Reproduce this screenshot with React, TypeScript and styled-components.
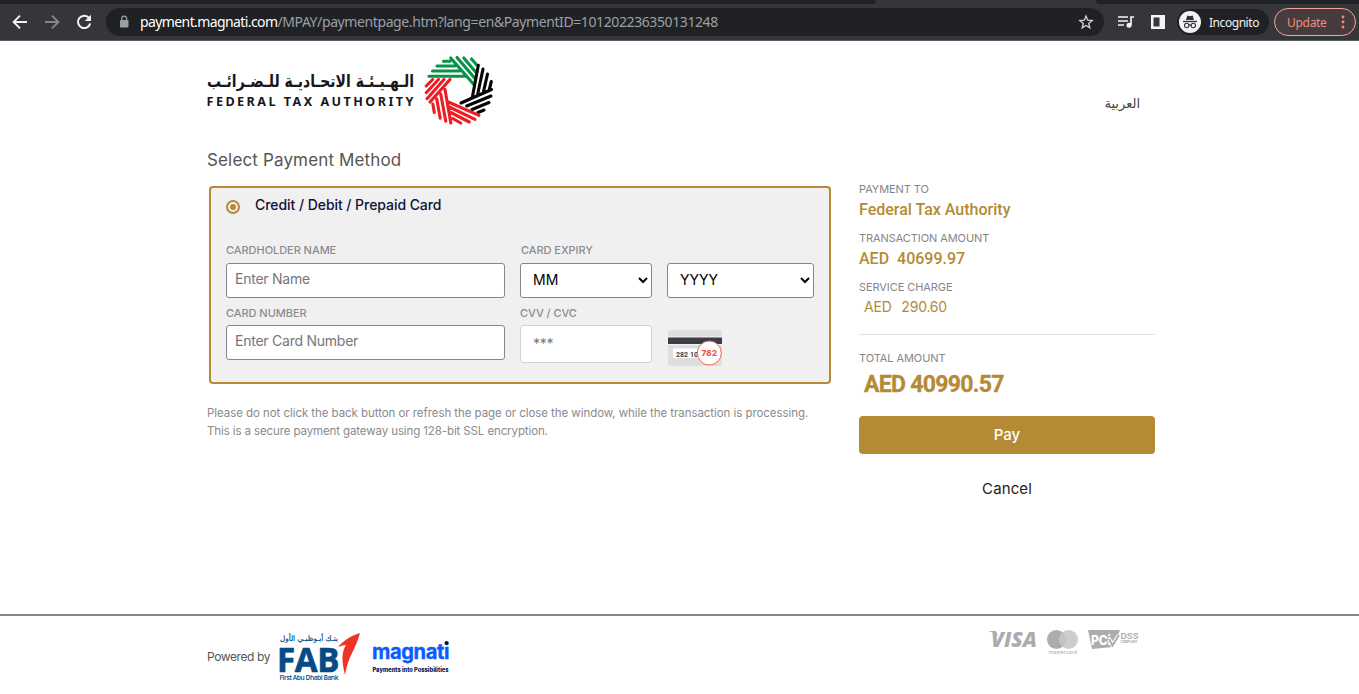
import React from "react";
import styled, { createGlobalStyle } from "styled-components";

const gold = "#b58a34";

const GlobalStyle = createGlobalStyle`
  *, *::before, *::after { box-sizing: border-box; }
  html, body { margin: 0; background: #fff; overflow: hidden; }
  body { font-family: Inter, "Liberation Sans", sans-serif; }
  svg { display: block; flex: none; overflow: visible; }
`;

const Page = styled.div`
  display: flex;
  flex-direction: column;
  height: 694px;
  width: 100%;
`;

/* Browser chrome */
const TabStrip = styled.div`
  display: grid;
  grid-template-columns: 876px 1fr 263px;
  height: 4px;
  background: #35363a;
`;
const TabGap = styled.div<{ $side: "left" | "right" }>`
  background: #202124;
  border-radius: ${(p) => (p.$side === "left" ? "0 0 4px 0" : "0 0 0 4px")};
  grid-column: ${(p) => (p.$side === "left" ? 1 : 3)};
`;
const Toolbar = styled.div`
  display: flex;
  align-items: center;
  height: 37px;
  padding-left: 12px;
  background: #35363a;
  border-bottom: 1px solid #5b5c5f;
  font-family: "Noto Sans", "Open Sans", sans-serif;
`;
const NavIcons = styled.div`
  display: flex;
  gap: 16px;
  width: 94px;
`;
const AddressBar = styled.div`
  display: flex;
  align-items: center;
  width: 998px;
  height: 28px;
  padding: 0 10px 0 12px;
  border-radius: 14px;
  background: #202124;
`;
const Url = styled.div`
  flex: 1;
  margin-left: 10px;
  font-size: 14px;
  letter-spacing: -0.4px;
  line-height: 28px;
  color: #9aa0a6;
  white-space: nowrap;
  span { color: #fff; letter-spacing: -0.6px; }
`;
const ToolIcons = styled.div`
  display: flex;
  gap: 16px;
  margin-left: 14px;
`;
const Incognito = styled.div`
  display: flex;
  align-items: center;
  gap: 8px;
  width: 92px;
  height: 26px;
  margin-left: 11px;
  padding-left: 2px;
  border-radius: 13px;
  background: #202124;
  color: #f1f3f4;
  font-size: 12px;
  letter-spacing: -0.45px;
`;
const Update = styled.div`
  display: flex;
  align-items: center;
  justify-content: space-between;
  width: 82px;
  height: 28px;
  margin-left: 5px;
  padding: 0 10px 0 12px;
  border: 1px solid #f5a49b;
  border-radius: 14px;
  background: #463c3e;
  color: #f28b82;
  font-size: 12px;
  letter-spacing: -0.3px;
`;

/* Payment page */
const Header = styled.header`
  display: flex;
  justify-content: space-between;
  height: 96px;
  padding: 9px 219px 0 200px;
`;
const Language = styled.a`
  margin-top: 42px;
  font: 13px/24px "Liberation Serif", "DejaVu Sans", serif;
  letter-spacing: -0.2px;
  color: #444;
`;
const Main = styled.main`
  display: grid;
  grid-template-columns: 624px 296px;
  column-gap: 28px;
  height: 477px;
  padding-left: 207px;
`;
const Left = styled.section`
  display: flex;
  flex-direction: column;
`;
const Title = styled.h1`
  margin: 12px 0 15px;
  font-size: 17px;
  line-height: 22px;
  font-weight: 400;
  letter-spacing: 0.15px;
  color: #555;
`;
const CardPanel = styled.div`
  width: 622px;
  height: 198px;
  margin-left: 2px;
  padding: 9px 15px 0;
  border: 2px solid ${gold};
  border-radius: 4px;
  background: #f0f0f0;
`;
const MethodRow = styled.label`
  display: flex;
  align-items: flex-start;
  height: 20px;
  gap: 15px;
  font-size: 14px;
  line-height: 16px;
  font-weight: 500;
  letter-spacing: -0.06px;
  color: #12123a;
`;
const Radio = styled.span`
  display: grid;
  place-items: center;
  width: 14px;
  height: 14px;
  margin-top: 3px;
  border: 2px solid ${gold};
  border-radius: 50%;
  &::after {
    content: "";
    width: 6px;
    height: 6px;
    border-radius: 50%;
    background: ${gold};
  }
`;
const Fields = styled.div`
  display: grid;
  grid-template-columns: 279px 132px 147px;
  column-gap: 15px;
  margin-top: 26px;
`;
const FieldLabel = styled.div<{ $row: 1 | 2; $inset?: boolean }>`
  height: ${(p) => (p.$row === 1 ? 20 : 27)}px;
  padding-top: ${(p) => (p.$row === 1 ? 0 : 8)}px;
  padding-left: ${(p) => (p.$inset ? 1 : 0)}px;
  font-size: 11px;
  line-height: 14px;
  font-weight: 500;
  letter-spacing: -0.05px;
  color: #8b8b8f;
`;
const Input = styled.input<{ $light?: boolean }>`
  width: 100%;
  height: ${(p) => (p.$light ? 38 : 35)}px;
  padding: 0 ${(p) => (p.$light ? 12 : 8)}px ${(p) => (p.$light ? 2 : 4)}px;
  border: 1px solid ${(p) => (p.$light ? "#ced4da" : "#86868b")};
  border-radius: ${(p) => (p.$light ? 4 : 3)}px;
  background: #fff;
  font: 14px Inter, sans-serif;
  letter-spacing: -0.24px;
  &::placeholder { color: #76767a; opacity: 1; }
`;
const Select = styled.select`
  width: 100%;
  height: 35px;
  padding: 0 2px 2px 8px;
  border: 1px solid #86868b;
  border-radius: 3px;
  background: #fff;
  color: #000;
  font: 14px Inter, sans-serif;
`;
const CvvHint = styled.div`
  padding: 5px 0 0 1px;
`;
const Notice = styled.p`
  margin: 20px 0 0;
  font-size: 11.5px;
  line-height: 18px;
  letter-spacing: -0.06px;
  color: #8a8a8e;
  white-space: nowrap;
`;
const NoticeLine = styled.span<{ $tight?: boolean }>`
  display: block;
  letter-spacing: ${(p) => (p.$tight ? "-0.11px" : "-0.06px")};
`;

const Summary = styled.aside`
  display: flex;
  flex-direction: column;
  padding-top: 44px;
  font-family: Roboto, sans-serif;
  color: ${gold};
`;
const Caption = styled.div<{ $spaced?: boolean }>`
  margin-top: ${(p) => (p.$spaced ? 15 : 0)}px;
  font: 400 11px/16px Inter, sans-serif;
  letter-spacing: -0.08px;
  color: #85858a;
`;
const Payee = styled.div`
  height: 33px;
  padding-top: 3px;
  font-size: 16px;
  line-height: 20px;
  font-weight: 500;
  white-space: pre;
`;
const Charge = styled.div`
  height: 40px;
  padding: 2px 0 0 5px;
  border-bottom: 1px solid #e2e2e2;
  font: 14px/20px Inter, sans-serif;
  letter-spacing: -0.22px;
  word-spacing: 1.2px;
  white-space: pre;
`;
const Total = styled.div`
  padding: 4px 0 0 5px;
  height: 50px;
  font-size: 23px;
  line-height: 30px;
  font-weight: 700;
  letter-spacing: -0.7px;
  -webkit-text-stroke: 0.3px ${gold};
`;
const PayButton = styled.button`
  height: 38px;
  padding: 0 0 2px;
  border: 0;
  border-radius: 4px;
  background: ${gold};
  color: #fff;
  font: 500 15px Inter, sans-serif;
`;
const CancelButton = styled.button`
  align-self: center;
  height: 24px;
  margin-top: 22px;
  padding: 0;
  border: 0;
  background: none;
  color: #222;
  font: 400 15px Inter, sans-serif;
  letter-spacing: 0.1px;
`;

const Footer = styled.footer`
  display: flex;
  justify-content: space-between;
  flex: 1;
  border-top: 2px solid #87878b;
  padding: 12px 220px 0 207px;
`;
const Powered = styled.div`
  display: flex;
  align-items: flex-start;
  font-size: 12px;
  letter-spacing: -0.4px;
  color: #555;
  > span { width: 70px; padding-top: 21px; line-height: 15px; white-space: nowrap; }
`;

const BackIcon = ({ color, flip }: { color: string; flip?: boolean }) => (
  <svg width="16" height="16" viewBox="0 0 16 16" fill="none" stroke={color} strokeWidth="1.9">
    <path d={flip ? "M1 8H14M8 1.6L14.4 8L8 14.4" : "M15 8H2M8 1.6L1.6 8L8 14.4"} />
  </svg>
);

const TaxLogo = () => (
  <svg width="300" height="80" viewBox="0 0 300 80">
    <g fill="#17171b">
      <text transform="translate(214 36.500) scale(1 1.150)" textAnchor="end" direction="ltr" fontFamily="DejaVu Sans, sans-serif" fontWeight="700" fontSize="15" textLength="207" lengthAdjust="spacingAndGlyphs">الـهـيـئـة الاتحـاديـة للـضـرائـب</text>
      <text x="6.500" y="55.500" fontFamily="Noto Sans, sans-serif" fontWeight="700" fontSize="12.600" textLength="207" lengthAdjust="spacing">FEDERAL TAX AUTHORITY</text>
    </g>
    <g transform="translate(215 0)" fill="none" strokeWidth="3.1" strokeLinecap="round">
      <path stroke="#079447" d="M14 26.300H50M17.500 21H44.500M22 16H40M28.500 11.300H35M35.700 8L59.300 35M42 7.500L60 28.500M48.800 8L60.700 22M56.500 9L61.500 14.700" />
      <path stroke="#060606" d="M63.300 15.300L57.300 47.500M68 19L62.500 45M72.500 24L68.300 42.700M76.300 31.500L74.300 39.500M46 53L76.500 39.500M51.700 56L76 46M57 59.500L74 52.500M63 62.500L69 60" />
      <path stroke="#ee1d25" d="M35 29.500L15 52M29 29.500L12 48.700M23.500 29.500L11.200 42.700M17.700 29.500L11.200 36M30 39.500L35.800 73M25.700 44L30.800 71.300M21.700 48.700L25.200 68.300M17.800 54L19.300 62.500M33.300 52L64 65.300M34.300 57L60 69.300M35.700 62.500L54.300 72M37.700 68.500L45.700 73" />
    </g>
  </svg>
);

const CardBack = () => (
  <svg width="54" height="36" viewBox="0 0 54 36">
    <rect width="54" height="36" rx="3" fill="#dedede" />
    <rect y="6.500" width="54" height="8.500" fill="#f1f1f1" />
    <rect y="7.500" width="54" height="6.500" fill="#3e3d43" />
    <rect x="5" y="18.500" width="30" height="9.500" fill="#fff" />
    <text x="8" y="26.500" fontFamily="Roboto, sans-serif" fontWeight="700" fontSize="7" fill="#3e3d43" textLength="22">282 10</text>
    <circle cx="41.300" cy="23" r="12" fill="#fff" stroke="#f4694d" />
    <text x="33.500" y="25.800" fontFamily="Inter, sans-serif" fontWeight="800" fontSize="8" fill="#f4512f" textLength="15.500">782</text>
  </svg>
);

const FabLogo = () => (
  <svg width="90" height="56" viewBox="7 0 90 56" fill="#064a86">
    <text x="68" y="13" textAnchor="end" direction="ltr" fontFamily="DejaVu Sans, sans-serif" stroke="#064a86" strokeWidth=".2" fontSize="7.500" textLength="58" lengthAdjust="spacingAndGlyphs">بنـك أبـوظبـي الأول</text>
    <text x="7" y="43.500" fontFamily="Open Sans, sans-serif" fontWeight="700" fontSize="34" stroke="#064a86" strokeWidth=".7" textLength="62" lengthAdjust="spacingAndGlyphs">FAB</text>
    <text x="9.500" y="51.700" fontFamily="Open Sans, sans-serif" fontWeight="600" fontSize="6.200" textLength="58.500" lengthAdjust="spacingAndGlyphs">First Abu Dhabi Bank</text>
    <path fill="#ef3329" d="M90 5C82 7 73 13 68 19Q73 17 76 17C71 25 72 34 75 47Q77 34 84 21Q88 13 90 5Z" />
  </svg>
);

const MagnatiLogo = () => (
  <svg width="90" height="56" viewBox="0 0 90 56">
    <text x="5" y="31" fontFamily="Inter, sans-serif" fontWeight="700" fontSize="20.500" fill="#0b5cff" stroke="#0b5cff" strokeWidth=".4" textLength="77" lengthAdjust="spacingAndGlyphs">magnati</text>
    <circle cx="79.500" cy="15" r="2" fill="#08104a" />
    <text x="5.500" y="43.800" fontFamily="Inter, sans-serif" fontWeight="800" fontSize="6" fill="#08104a" letterSpacing="0" textLength="76" lengthAdjust="spacingAndGlyphs">Payments into Possibilities</text>
  </svg>
);

const CardBrands = () => (
  <svg width="154" height="28" viewBox="0 0 154 28" fill="#acacae">
    <text x="6" y="18.500" fontFamily="Open Sans, sans-serif" fontStyle="italic" fontWeight="800" fontSize="21" textLength="46" lengthAdjust="spacingAndGlyphs">VISA</text>
    <path d="M3 3H11L13 8Q9 4 3 3Z" />
    <circle cx="71.500" cy="11.500" r="9.500" />
    <circle cx="83.500" cy="11.500" r="9.500" fill="#c6c6c8" fillOpacity=".88" />
    <text x="63.500" y="25.500" fontFamily="Inter, sans-serif" fontSize="5.200" textLength="28.500">mastercard</text>
    <path d="M103 2H135L128 19L107 21Z" />
    <text x="106" y="17" fontFamily="Inter, sans-serif" fontWeight="800" fontSize="13" fill="#fff" textLength="20" lengthAdjust="spacingAndGlyphs">PCi</text>
    <path d="M124 11L127.500 17L134 7" fill="none" stroke="#fff" strokeWidth="4" />
    <path d="M124 11L127.500 17.500L134 7" fill="none" stroke="#acacae" strokeWidth="2" />
    <text x="135.500" y="11" fontFamily="Liberation Sans, sans-serif" fontWeight="700" fontSize="9" textLength="18" lengthAdjust="spacingAndGlyphs">DSS</text>
    <text x="135.500" y="14.800" fontFamily="Inter, sans-serif" fontWeight="700" fontSize="3" textLength="17">COMPLIANT</text>
  </svg>
);

export default function App() {
  return (
    <Page>
      <GlobalStyle />
      <TabStrip>
        <TabGap $side="left" />
        <TabGap $side="right" />
      </TabStrip>
      <Toolbar>
        <NavIcons>
          <BackIcon color="#f1f3f4" />
          <BackIcon color="#85868a" flip />
          <svg width="16" height="16" viewBox="0 0 16 16">
            <path d="M13.200 4.200A6.200 6.200 0 1 0 14.200 9.500" fill="none" stroke="#f1f3f4" strokeWidth="2" />
            <path d="M15 .8V7H8.800Z" fill="#f1f3f4" />
          </svg>
        </NavIcons>
        <AddressBar>
          <svg width="12" height="14" viewBox="0 0 12 14">
            <rect x="2" y="5" width="8.500" height="7.500" rx="1" fill="#9aa0a6" />
            <path d="M3.800 5.500V3.500a2.400 2.400 0 0 1 4.800 0V5.500" fill="none" stroke="#9aa0a6" strokeWidth="1.300" />
          </svg>
          <Url><span>payment.magnati.com</span>/MPAY/paymentpage.htm?lang=en&amp;PaymentID=101202236350131248</Url>
          <svg width="16" height="16" viewBox="0 0 16 16" fill="none" stroke="#d2d4d7" strokeWidth="1.300">
            <path d="M8 2L9.700 6.200L14.200 6.500L10.700 9.400L11.800 13.800L8 11.400L4.200 13.800L5.300 9.400L1.800 6.500L6.300 6.200Z" />
          </svg>
        </AddressBar>
        <ToolIcons>
          <svg width="16" height="16" viewBox="0 0 16 16">
            <path d="M0 3H10M0 7H10M0 11H6" stroke="#f1f3f4" strokeWidth="1.600" />
            <path d="M16 3H13V11" fill="none" stroke="#f1f3f4" strokeWidth="1.700" />
            <circle cx="11" cy="11.300" r="2.500" fill="#f1f3f4" />
          </svg>
          <svg width="16" height="16" viewBox="0 0 16 16">
            <path fillRule="evenodd" fill="#f1f3f4" d="M1 1H15V15H1ZM3.500 3.500V12.500H9.500V3.500Z" />
          </svg>
        </ToolIcons>
        <Incognito>
          <svg width="22" height="22" viewBox="0 0 22 22">
            <circle cx="11" cy="11" r="11" fill="#f1f3f4" />
            <path d="M7 9L8.300 4.500L11 5.200L13.700 4.500L15 9Z" fill="#303134" />
            <path d="M4 10.500H18" stroke="#303134" strokeWidth="1.300" />
            <g fill="none" stroke="#303134" strokeWidth="1.100">
              <circle cx="7.700" cy="14.500" r="2.200" /><circle cx="14.300" cy="14.500" r="2.200" />
              <path d="M10 14.200Q11 13.600 12 14.200" />
            </g>
          </svg>
          Incognito
        </Incognito>
        <Update>
          Update
          <svg width="4" height="14" viewBox="0 0 4 14" fill="#f28b82">
            <circle cx="2" cy="2" r="1.400" /><circle cx="2" cy="7" r="1.400" /><circle cx="2" cy="12" r="1.400" />
          </svg>
        </Update>
      </Toolbar>

      <Header>
        <TaxLogo />
        <Language lang="ar">العربية</Language>
      </Header>

      <Main>
        <Left>
          <Title>Select Payment Method</Title>
          <CardPanel>
            <MethodRow><Radio />Credit / Debit / Prepaid Card</MethodRow>
            <Fields>
              <FieldLabel $row={1}>CARDHOLDER NAME</FieldLabel>
              <FieldLabel $row={1} $inset>CARD EXPIRY</FieldLabel>
              <span />
              <Input placeholder="Enter Name" />
              <Select><option>MM</option></Select>
              <Select><option>YYYY</option></Select>
              <FieldLabel $row={2}>CARD NUMBER</FieldLabel>
              <FieldLabel $row={2}>CVV / CVC</FieldLabel>
              <span />
              <Input placeholder="Enter Card Number" />
              <Input placeholder="***" $light />
              <CvvHint><CardBack /></CvvHint>
            </Fields>
          </CardPanel>
          <Notice>
            <NoticeLine>Please do not click the back button or refresh the page or close the window, while the transaction is processing.</NoticeLine>
            <NoticeLine $tight>This is a secure payment gateway using 128-bit SSL encryption.</NoticeLine>
          </Notice>
        </Left>
        <Summary>
          <Caption>PAYMENT TO</Caption>
          <Payee>Federal Tax Authority</Payee>
          <Caption>TRANSACTION AMOUNT</Caption>
          <Payee>{"AED  40699.97"}</Payee>
          <Caption>SERVICE CHARGE</Caption>
          <Charge>{"AED  290.60"}</Charge>
          <Caption $spaced>TOTAL AMOUNT</Caption>
          <Total>AED 40990.57</Total>
          <PayButton>Pay</PayButton>
          <CancelButton>Cancel</CancelButton>
        </Summary>
      </Main>

      <Footer>
        <Powered>
          <span>Powered by</span>
          <FabLogo />
          <MagnatiLogo />
        </Powered>
        <CardBrands />
      </Footer>
    </Page>
  );
}
